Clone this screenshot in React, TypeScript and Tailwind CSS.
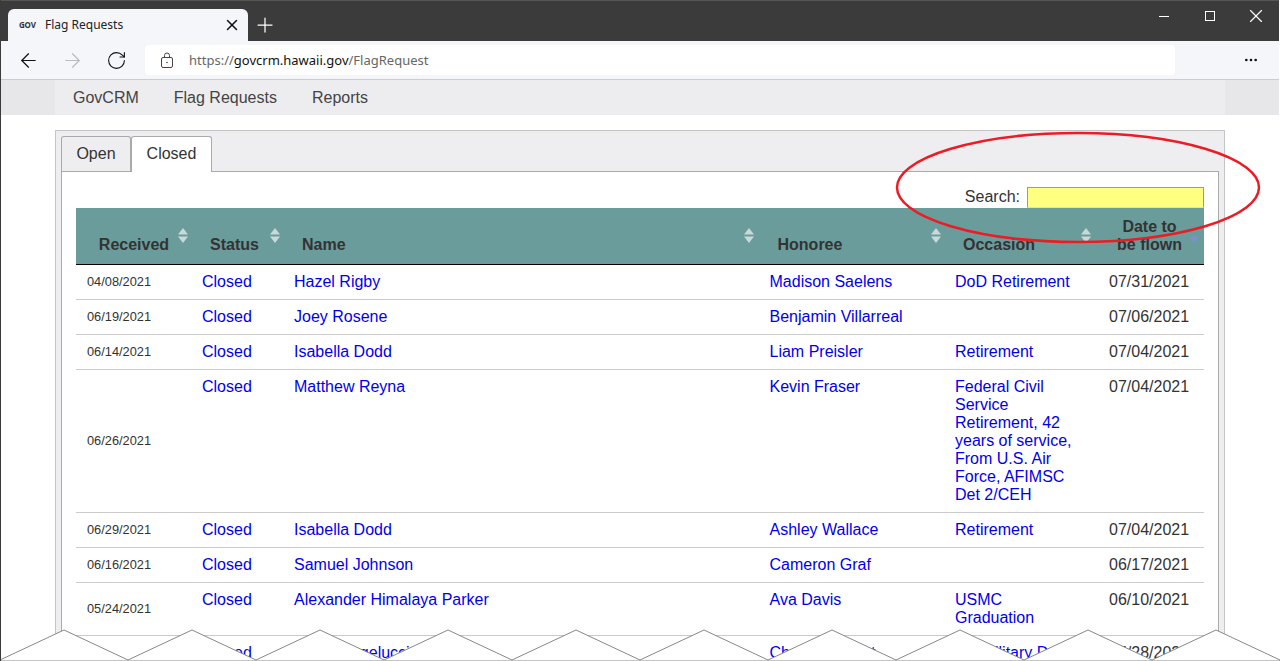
import { ArrowLeft, ArrowRight, MoreHorizontal, Plus, RotateCw, X } from "lucide-react";

type Row = {
  received: string;
  name: string;
  honoree: string;
  occasion: string;
  flown: string;
};

const rows: Row[] = [
  { received: "04/08/2021", name: "Hazel Rigby", honoree: "Madison Saelens", occasion: "DoD Retirement", flown: "07/31/2021" },
  { received: "06/19/2021", name: "Joey Rosene", honoree: "Benjamin Villarreal", occasion: "", flown: "07/06/2021" },
  { received: "06/14/2021", name: "Isabella Dodd", honoree: "Liam Preisler", occasion: "Retirement", flown: "07/04/2021" },
  {
    received: "06/26/2021",
    name: "Matthew Reyna",
    honoree: "Kevin Fraser",
    occasion: "Federal Civil Service Retirement, 42 years of service, From U.S. Air Force, AFIMSC Det 2/CEH",
    flown: "07/04/2021",
  },
  { received: "06/29/2021", name: "Isabella Dodd", honoree: "Ashley Wallace", occasion: "Retirement", flown: "07/04/2021" },
  { received: "06/16/2021", name: "Samuel Johnson", honoree: "Cameron Graf", occasion: "", flown: "06/17/2021" },
  { received: "05/24/2021", name: "Alexander Himalaya Parker", honoree: "Ava Davis", occasion: "USMC Graduation", flown: "06/10/2021" },
  { received: "05/20/2021", name: "Sarah Angelucci", honoree: "Chase Bennett", occasion: "US Military Duty Retirement Ceremony", flown: "05/28/2021" },
];

function SortArrows({ active, className }: { active?: boolean; className: string }) {
  return (
    <svg className={`absolute top-[20px] ${className}`} width="10" height="15" viewBox="0 0 10 15">
      {!active && <path d="M5 0 L10 6.5 L0 6.5 Z" fill="#c9d8d8" />}
      <path d="M0 8.5 L10 8.5 L5 15 Z" fill={active ? "#7d8fd0" : "#c9d8d8"} />
    </svg>
  );
}

function Th({
  label,
  active,
  center,
  arrowClass,
  padClass = "px-[18px]",
}: {
  label: string;
  active?: boolean;
  center?: boolean;
  arrowClass: string;
  padClass?: string;
}) {
  return (
    <th className={`relative align-bottom py-[10px] ${padClass} font-bold text-[#333] border-b border-black ${center ? "text-center" : "text-left"}`}>
      {label}
      <SortArrows active={active} className={arrowClass} />
    </th>
  );
}

export default function App() {
  return (
    <div className="relative h-[661px] w-[1280px] overflow-hidden bg-white font-['Liberation_Sans',Arial,sans-serif] text-[16px] leading-[18px] text-[#333]">
      {/* Browser chrome */}
      <div className="h-[41px] mr-px bg-[#3b3b3b] border-t border-[#555] flex items-end pl-[8px] font-['Noto_Sans',sans-serif]">
        <div className="w-[240px] h-[32px] bg-[#f5f6fa] rounded-t-[6px] flex items-center pl-[11px] pr-[7px]">
          <span className="w-[26px] text-[8px] font-bold text-[#333] tracking-tight">GOV</span>
          <span className="flex-1 text-[12px] text-[#222]">Flag Requests</span>
          <X size={18} strokeWidth={2} className="text-[#111]" />
        </div>
        <Plus size={24} strokeWidth={1.25} className="text-white ml-[5px] mb-[4px]" />
        <div className="ml-auto flex items-center h-[32px] mb-[9px] text-white">
          <span className="w-[10px] h-px bg-white mr-[36px]" />
          <span className="w-[10px] h-[10px] border border-white mr-[30px]" />
          <X size={22} strokeWidth={1.25} className="mr-[12px]" />
        </div>
      </div>
      <div className="h-[39px] bg-[#f5f6fa] border-b border-[#ccc] flex items-center pl-[17px] mr-px font-['Noto_Sans',sans-serif]">
        <ArrowLeft size={23} strokeWidth={1.25} className="text-[#111]" />
        <ArrowRight size={23} strokeWidth={1.25} className="text-[#bbb] ml-[21px]" />
        <RotateCw size={21} strokeWidth={1.25} className="text-[#111] ml-[22px]" />
        <div className="ml-[18px] w-[1030px] h-[30px] bg-white rounded-[4px] flex items-center pl-[15px] text-[13px]">
          <svg width="14" height="16" viewBox="0 0 14 16" fill="none" stroke="#444" strokeWidth="1">
            <rect x="1.5" y="5.5" width="11" height="10" rx="1.5" />
            <path d="M4.5 5.5 V3.5 a2.5 2.5 0 0 1 5 0 V5.5" />
            <circle cx="7" cy="10.5" r="0.8" fill="#444" stroke="none" />
          </svg>
          <span className="ml-[15px] text-[#666]">https://</span>
          <span className="text-[#111]">govcrm.hawaii.gov</span>
          <span className="text-[#666]">/FlagRequest</span>
        </div>
        <MoreHorizontal size={16} className="ml-[68px] text-[#111]" />
      </div>

      {/* Site nav */}
      <div className="h-[35px] bg-[#e7e7e9] mr-px">
        <div className="ml-[55px] w-[1170px] h-full bg-[#ededef] flex items-center pl-[18px] gap-[35px] text-[#444]">
          <span>GovCRM</span>
          <span>Flag Requests</span>
          <span>Reports</span>
        </div>
      </div>

      {/* Tab panel */}
      <div className="ml-[55px] mt-[15px] w-[1170px] bg-[#eeeef0] border border-[#c4c4c4] px-[5px] pt-[5px]">
        <div className="flex items-end h-[36px] -mb-px relative">
          <div className="w-[70px] h-[35px] border border-[#aaa] border-b-0 rounded-t-[3px] flex items-center justify-center bg-[#eeeef0] mb-px">
            Open
          </div>
          <div className="w-[81px] h-[36px] pb-[2px] border border-[#aaa] border-b-0 rounded-t-[3px] flex items-center justify-center bg-white relative z-10">
            Closed
          </div>
        </div>
        <div className="bg-white border border-[#aaa] h-[520px] px-[14px]">
          <div className="h-[36px] flex items-end justify-end">
            <span className="mr-[7px] mb-[2px]">Search:</span>
            <div className="w-[177px] h-[21px] bg-[#ffff80] border border-[#999] border-b-[#ddd]" />
          </div>
          <table className="w-[1128px] table-fixed border-collapse">
            <colgroup>
              <col className="w-[116px]" />
              <col className="w-[92px]" />
              <col className="w-[475.5px]" />
              <col className="w-[185.5px]" />
              <col className="w-[154px]" />
              <col className="w-[105px]" />
            </colgroup>
            <thead className="bg-[#6a9c9c]">
              <tr>
                <Th label="Received" center arrowClass="right-[4px]" />
                <Th label="Status" arrowClass="right-[4px]" />
                <Th label="Name" arrowClass="right-[6px]" />
                <Th label="Honoree" arrowClass="right-[4px]" />
                <Th label="Occasion" arrowClass="right-[8px]" />
                <Th label="Date to be flown" active center arrowClass="right-[5px]" padClass="pl-[16px] pr-[20px]" />
              </tr>
            </thead>
            <tbody>
              {rows.map((r) => (
                <tr key={r.received} className="border-b border-[#ccc]">
                  <td className="pl-[11px] pr-[10px] py-[8px] text-[12.8px] align-middle">{r.received}</td>
                  <td className="px-[10px] py-[8px] align-top text-[#0000ee]">Closed</td>
                  <td className="px-[10px] py-[8px] align-top text-[#0000ee]">{r.name}</td>
                  <td className="px-[10px] py-[8px] align-top text-[#0000ee]">{r.honoree}</td>
                  <td className="pl-[10px] pr-[20px] py-[8px] align-top text-[#0000ee]">{r.occasion}</td>
                  <td className="px-[10px] py-[8px] align-top">{r.flown}</td>
                </tr>
              ))}
            </tbody>
          </table>
        </div>
      </div>

      {/* Annotation circle over the search box */}
      <svg className="absolute inset-0 pointer-events-none" width="1280" height="661">
        <ellipse cx="1078" cy="187.5" rx="181" ry="54.5" fill="none" stroke="#ed1c24" strokeWidth="2.5" />
      </svg>

      {/* Torn page edge */}
      <svg className="absolute left-0 bottom-0 pointer-events-none" width="1280" height="32" viewBox="0 629 1280 32">
        <path
          d="M0 660 L64 630 L128 660 L192 630 L256 660 L320 630 L384 660 L448 630 L512 660 L576 630 L640 660 L704 630 L768 660 L832 630 L896 660 L960 630 L1024 660 L1088 630 L1152 660 L1216 630 L1280 660 L1280 661 L0 661 Z"
          fill="#fff"
          stroke="#888"
          strokeWidth="1"
        />
      </svg>
      <div className="absolute left-0 top-0 bottom-0 w-px bg-[#3b3b3b]" />
    </div>
  );
}
